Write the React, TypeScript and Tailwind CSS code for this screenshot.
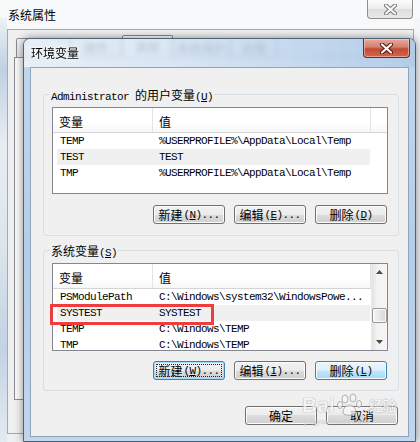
import React from "react";

const MONO = "font-['Liberation_Mono','Noto_Sans_CJK_SC',monospace] text-[11px] tracking-[-0.6px]";
const CJK = "font-['Noto_Sans_CJK_SC','Noto_Sans',sans-serif] text-[12px]";

function Acc({ c }: { c: string }) {
  return <span className="underline underline-offset-[1px]">{c}</span>;
}

type BtnKind = "normal" | "focus" | "hover";

function Btn({ zh, acc, dots, kind = "normal" }: { zh: string; acc?: string; dots?: boolean; kind?: BtnKind }) {
  const skin =
    kind === "hover"
      ? "border-[#3c7fb1] bg-[linear-gradient(#eaf6fd,#d9f0fc_50%,#bee6fd_50%,#a7d9f5)] shadow-[inset_0_0_0_1px_#fcfcfc]"
      : kind === "focus"
      ? "border-[#3c7fb1] bg-[linear-gradient(#f2f2f2,#ebebeb_50%,#dddddd_50%,#cfcfcf)] shadow-[inset_0_0_0_1px_#a6dcf7]"
      : "border-[#707070] bg-[linear-gradient(#f2f2f2,#ebebeb_50%,#dddddd_50%,#cfcfcf)] shadow-[inset_0_0_0_1px_#fcfcfc]";
  return (
    <div className={"relative w-[72px] h-[19px] rounded-[3px] border flex items-center justify-center text-black " + skin}>
      <span className={CJK + " leading-[14px]"}>{zh}</span>
      {acc && (
        <span className={MONO + " leading-[14px] ml-[1px]"}>
          (<Acc c={acc} />){dots ? "..." : ""}
        </span>
      )}
      {kind === "focus" && <div className="absolute inset-[2px] border border-dotted border-[#222]" />}
    </div>
  );
}

function Row({ name, value, hi }: { name: string; value: string; hi?: boolean }) {
  return (
    <div className={"ml-[4px] w-[313px] h-[16px] shrink-0 flex items-center leading-[16px] text-black " + (hi ? "bg-[#f0f0f0]" : "")}>
      <div className={"w-[102px] pl-[3px] whitespace-nowrap " + MONO}>{name}</div>
      <div className={"whitespace-nowrap " + MONO}>{value}</div>
    </div>
  );
}

function ScrollBar() {
  return (
    <div className="w-[16px] flex flex-col bg-[linear-gradient(to_right,#e3e3e3,#f3f3f3_35%,#f5f5f5)] border-l border-[#e8e8e8]">
      <div className="h-[16px] flex items-center justify-center">
        <svg width="7" height="4" viewBox="0 0 7 4"><path d="M0 4 L3.5 0 L7 4 Z" fill="#4a4a4a" /></svg>
      </div>
      <div className="mt-[28px] h-[15px] w-[15px] rounded-[2px] border border-[#979797] bg-[linear-gradient(to_right,#f6f6f6,#e6e6e6_50%,#d6d6d6)] shadow-[inset_0_0_0_1px_#fbfbfb]" />
      <div className="flex-1" />
      <div className="h-[16px] flex items-center justify-center">
        <svg width="7" height="4" viewBox="0 0 7 4"><path d="M0 0 L3.5 4 L7 0 Z" fill="#4a4a4a" /></svg>
      </div>
    </div>
  );
}

function ListView({ rows, h, scroll }: { rows: { n: string; v: string; hi?: boolean }[]; h: string; scroll?: boolean }) {
  return (
    <div className={"flex w-[336px] border border-[#828790] bg-white overflow-hidden " + h}>
      <div className="flex flex-col w-[318px]">
        <div className="flex h-[25px] shrink-0 border-b border-[#d5d5d5] bg-[linear-gradient(#ffffff,#ffffff_60%,#f6f7f9)]">
          <div className={"w-[100px] border-r border-[#e3e4e6] pl-[6px] pt-[3px] flex items-center text-black " + CJK}>变量</div>
          <div className={"w-[218px] border-r border-[#e3e4e6] pl-[6px] pt-[3px] flex items-center text-black " + CJK}>值</div>
        </div>
        {rows.map((r) => (
          <Row key={r.n} name={r.n} value={r.v} hi={r.hi} />
        ))}
      </div>
      {scroll ? (
        <ScrollBar />
      ) : (
        <div className="w-[16px] h-[25px] border-b border-[#d5d5d5] bg-[linear-gradient(#ffffff,#ffffff_60%,#f6f7f9)]" />
      )}
    </div>
  );
}

function GroupLabel({ children }: { children: React.ReactNode }) {
  return (
    <div className="absolute left-[6px] top-[-9px] h-[16px] px-[1px] bg-[#f0f0f0] leading-[16px] text-black whitespace-nowrap">
      {children}
    </div>
  );
}

function Tab({ w, label, sel }: { w: string; label: string; sel?: boolean }) {
  return (
    <div
      className={
        "border border-b-0 border-[#898c95] rounded-t-[2px] flex items-center justify-center text-[#333] " +
        w +
        " " +
        (sel ? "h-[22px] bg-white" : "h-[19px] bg-[linear-gradient(#f3f3f3,#e3e3e3)]") +
        " " +
        CJK
      }
    >
      {label}
    </div>
  );
}

function CloseX({ dark, light }: { dark: string; light: string }) {
  return (
    <svg width="13" height="11" viewBox="0 0 13 11">
      <path d="M2 1.5 L11 9.5 M11 1.5 L2 9.5" stroke={dark} strokeWidth="4.2" strokeLinecap="round" />
      <path d="M2 1.5 L11 9.5 M11 1.5 L2 9.5" stroke={light} strokeWidth="2.2" strokeLinecap="round" />
    </svg>
  );
}

export default function App() {
  return (
    <div className="relative w-[420px] h-[442px] overflow-hidden bg-[linear-gradient(to_bottom,#f8f9fa,#eef1f4)]">
      {/* outer window glass strip */}
      <div className="absolute left-0 top-[18px] w-[7px] h-[424px] bg-[linear-gradient(to_bottom,#eef1f4,#bfd1e3_12%,#e8edf2_30%,#dbe4ec_55%,#c2d3e4_78%,#e4eaf0)]" />
      <div className="absolute right-0 top-[18px] w-[6px] h-[424px] bg-[linear-gradient(to_bottom,#f3f5f7,#e6ebf0)]" />

      {/* outer title */}
      <div className={"absolute left-[8px] top-[6px] h-[18px] flex items-center text-black " + CJK}>系统属性</div>
      <div className="absolute left-[367px] top-0 w-[46px] h-[19px] rounded-b-[4px] border border-t-0 border-[#8e8e8e] bg-[linear-gradient(#fbfbfb,#ececec_50%,#dedede_50%,#e9e9e9)] flex items-center justify-center">
        <CloseX dark="#7d7d7d" light="#f6f6f6" />
      </div>

      {/* outer client */}
      <div className="absolute left-[7px] top-[29px] w-[407px] h-[405px] border border-[#a9a9a9] bg-[#f0f0f0]">
        <div className="flex items-end pl-[8px] pt-[5px] h-[27px]">
          <Tab w="w-[54px]" label="" />
          <Tab w="w-[52px]" label="硬件" />
          <Tab w="w-[51px]" label="高级" sel />
          <Tab w="w-[57px]" label="系统保护" />
          <Tab w="w-[48px]" label="远程" />
        </div>
        <div className="ml-[6px] w-[392px] h-[343px] border border-[#898c95] bg-[#f9f9f9]" />
      </div>

      {/* dialog */}
      <div className="absolute left-[23px] top-[38px] w-[393px] h-[404px] border border-[#4f6277] rounded-t-[7px] overflow-hidden flex flex-col shadow-[0_0_8px_rgba(0,0,0,0.45)]">
        <div className="relative h-[28px] shrink-0 backdrop-blur-[2px] bg-[linear-gradient(to_right,rgba(228,237,247,0.82),rgba(206,223,241,0.85)_45%,rgba(172,200,231,0.9))] flex items-center pl-[7px]">
          <span className={"text-black [text-shadow:0_0_6px_#ffffff,0_0_3px_#ffffff] " + CJK}>环境变量</span>
          <div className="absolute left-[339px] top-0 w-[47px] h-[19px] rounded-b-[4px] border border-t-0 border-[#6a2a20] bg-[linear-gradient(#e9a99b,#d47f6c_45%,#c24a35_55%,#d2674f)] shadow-[inset_0_0_0_1px_rgba(255,220,210,0.5)] flex items-center justify-center">
            <CloseX dark="#4a1a12" light="#ffffff" />
          </div>
        </div>
        <div className="flex-1 px-[6px] pb-[4px] bg-[linear-gradient(to_bottom,#c0d6ec,#b5cde6_50%,#c1d6ec)]">
          <div className="relative w-[379px] h-[370px] bg-[#f0f0f0] border border-[#8ea4bd] pl-[12px] pt-[26px] flex flex-col">
            {/* user variables */}
            <div className="relative w-[356px] h-[142px] shrink-0 border border-[#d5dfe5] rounded-[3px] pt-[12px] pl-[8px] pr-[10px] flex flex-col">
              <GroupLabel>
                <span className={MONO}>{"Administrator\u00a0"}</span>
                <span className={CJK}>的用户变量</span>
                <span className={MONO}>
                  (<Acc c="U" />)
                </span>
              </GroupLabel>
              <ListView
                h="h-[87px]"
                rows={[
                  { n: "TEMP", v: "%USERPROFILE%\\AppData\\Local\\Temp" },
                  { n: "TEST", v: "TEST", hi: true },
                  { n: "TMP", v: "%USERPROFILE%\\AppData\\Local\\Temp" },
                ]}
              />
              <div className="mt-[11px] flex justify-end gap-[9px] pr-[1px]">
                <Btn zh="新建" acc="N" dots />
                <Btn zh="编辑" acc="E" dots />
                <Btn zh="删除" acc="D" />
              </div>
            </div>

            {/* system variables */}
            <div className="relative mt-[14px] w-[356px] h-[141px] shrink-0 border border-[#d5dfe5] rounded-[3px] pt-[12px] pl-[8px] pr-[10px] flex flex-col">
              <GroupLabel>
                <span className={CJK}>系统变量</span>
                <span className={MONO}>
                  (<Acc c="S" />)
                </span>
              </GroupLabel>
              <div className="relative">
                <ListView
                  h="h-[88px]"
                  scroll
                  rows={[
                    { n: "PSModulePath", v: "C:\\Windows\\system32\\WindowsPowe..." },
                    { n: "SYSTEST", v: "SYSTEST", hi: true },
                    { n: "TEMP", v: "C:\\Windows\\TEMP" },
                    { n: "TMP", v: "C:\\Windows\\TEMP" },
                  ]}
                />
                <div className="absolute left-[-2px] top-[41px] w-[164px] h-[21px] border-[3px] border-[#ef3c3c]" />
              </div>
              <div className="mt-[10px] flex justify-end gap-[9px] pr-[1px]">
                <Btn zh="新建" acc="W" dots kind="focus" />
                <Btn zh="编辑" acc="I" dots />
                <Btn zh="删除" acc="L" kind="hover" />
              </div>
            </div>

            <div className="mt-[15px] w-[356px] flex justify-end gap-[9px] pr-[1px]">
              <Btn zh="确定" />
              <Btn zh="取消" />
            </div>
          </div>
        </div>
      </div>

      {/* watermark */}
      <div className="absolute left-[302px] top-[393px] opacity-75">
        <div className="flex items-center">
          <span className="font-['Liberation_Sans',sans-serif] font-bold text-[21px] leading-[22px] text-[#f6f6f6] [text-shadow:0_0_1px_#8f8f8f,0_0_1px_#8f8f8f]">
            Bai
          </span>
          <svg width="32" height="24" viewBox="0 0 32 24" className="mx-[1px]">
            <g fill="#f6f6f6" stroke="#9a9a9a" strokeWidth="1">
              <ellipse cx="9" cy="6" rx="3" ry="4" />
              <ellipse cx="17" cy="5" rx="3" ry="4" />
              <ellipse cx="4" cy="12" rx="2.5" ry="3.5" />
              <ellipse cx="23" cy="11" rx="2.5" ry="3.5" />
              <path d="M7 20 C7 14 11 12 13.5 12 C16 12 20 14 20 20 C20 23 7 23 7 20 Z" />
            </g>
          </svg>
          <span className="font-['Noto_Sans_CJK_SC',sans-serif] font-bold text-[14px] leading-[16px] text-[#f6f6f6] [text-shadow:0_0_1px_#8f8f8f,0_0_1px_#8f8f8f]">
            经验
          </span>
        </div>
        <div className="font-['Liberation_Sans',sans-serif] text-[8px] leading-[9px] text-[#e2e2e2] [text-shadow:0_0_1px_#a5a5a5] ml-[2px]">
          jingyan.baidu.com
        </div>
      </div>
    </div>
  );
}
